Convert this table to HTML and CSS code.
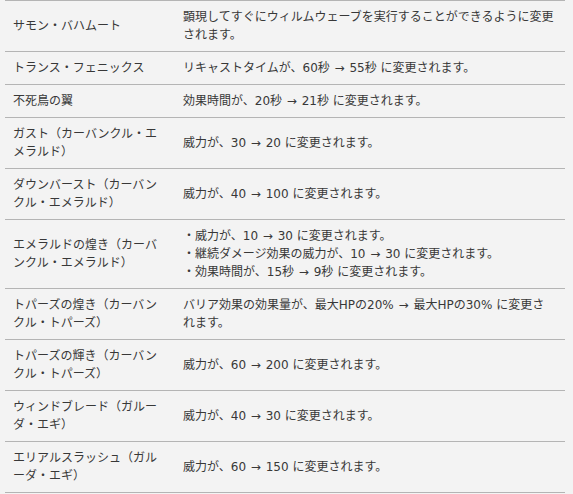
FILE: index.html
```html
<!DOCTYPE html>
<html lang="ja">
<head>
<meta charset="utf-8">
<title>変更点</title>
<link rel="stylesheet" href="styles.css">
</head>
<body>
<table class="changes">
  <colgroup><col class="col-name"><col class="col-desc"></colgroup>
  <tbody>
    <tr><td class="name">サモン・バハムート</td><td class="desc">顕現してすぐにウィルムウェーブを実行することができるように変更されます。</td></tr>
    <tr><td class="name">トランス・フェニックス</td><td class="desc">リキャストタイムが、60秒 <span class="arrow">→</span> 55秒 に変更されます。</td></tr>
    <tr><td class="name">不死鳥の翼</td><td class="desc">効果時間が、20秒 <span class="arrow">→</span> 21秒 に変更されます。</td></tr>
    <tr><td class="name">ガスト（カーバンクル・エメラルド）</td><td class="desc">威力が、30 <span class="arrow">→</span> 20 に変更されます。</td></tr>
    <tr><td class="name">ダウンバースト（カーバンクル・エメラルド）</td><td class="desc">威力が、40 <span class="arrow">→</span> 100 に変更されます。</td></tr>
    <tr><td class="name">エメラルドの煌き（カーバンクル・エメラルド）</td><td class="desc">・威力が、10 <span class="arrow">→</span> 30 に変更されます。<br>・継続ダメージ効果の威力が、10 <span class="arrow">→</span> 30 に変更されます。<br>・効果時間が、15秒 <span class="arrow">→</span> 9秒 に変更されます。</td></tr>
    <tr><td class="name">トパーズの煌き（カーバンクル・トパーズ）</td><td class="desc">バリア効果の効果量が、最大HPの20% <span class="arrow">→</span> 最大HPの30% に変更されます。</td></tr>
    <tr><td class="name">トパーズの輝き（カーバンクル・トパーズ）</td><td class="desc">威力が、60 <span class="arrow">→</span> 200 に変更されます。</td></tr>
    <tr><td class="name">ウィンドブレード（ガルーダ・エギ）</td><td class="desc">威力が、40 <span class="arrow">→</span> 30 に変更されます。</td></tr>
    <tr><td class="name">エリアルスラッシュ（ガルーダ・エギ）</td><td class="desc">威力が、60 <span class="arrow">→</span> 150 に変更されます。</td></tr>
  </tbody>
</table>
</body>
</html>
```
FILE: styles.css
```css
html, body {
  margin: 0;
  padding: 0;
  background: #f3f3f3;
}
body {
  padding: 0 5px;
  font-family: "DejaVu Sans", "Noto Sans CJK JP", sans-serif;
  font-size: 12px;
  line-height: 18px;
  color: #383838;
}
.changes {
  width: 560px;
  table-layout: fixed;
  border-collapse: collapse;
  border-top: 1px solid #b4b4b4;
}
.col-name {
  width: 170px;
}
.col-desc {
  width: 390px;
}
.changes td {
  border-bottom: 1px solid #b4b4b4;
  padding: 7px 8px;
  vertical-align: middle;
  text-align: left;
}
.changes .name {
  padding-right: 12px;
}
.changes .desc {
  padding-right: 9.5px;
}
.arrow {
  padding: 0 1px;
}
```
